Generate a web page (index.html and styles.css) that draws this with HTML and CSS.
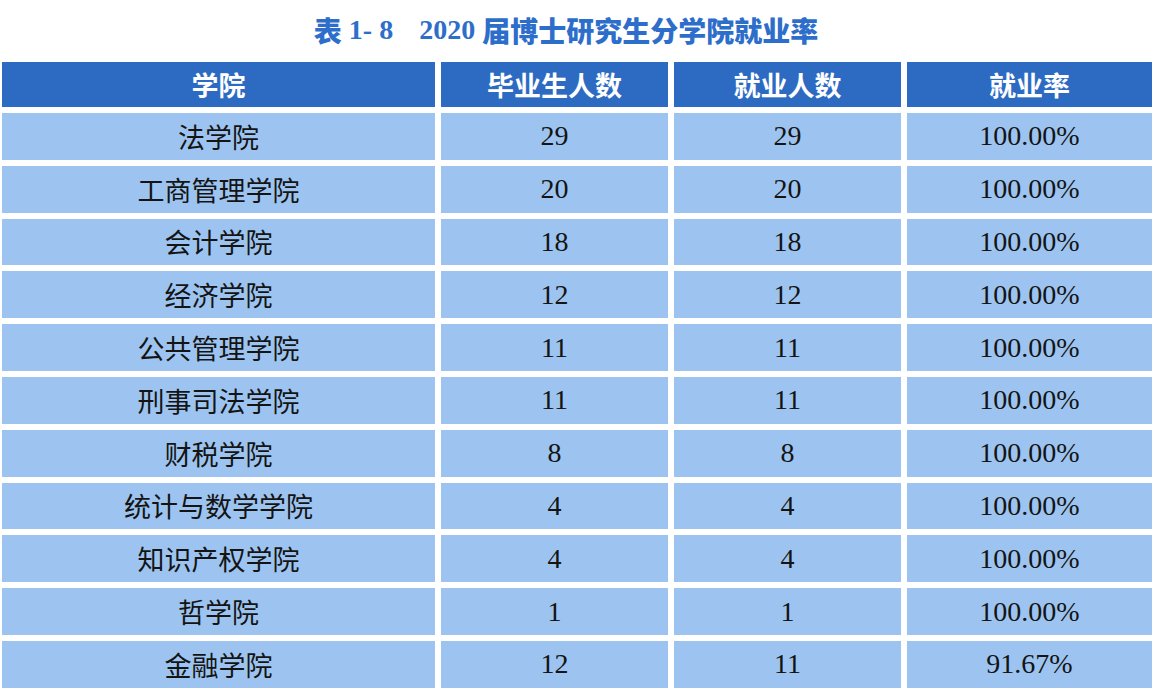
FILE: index.html
```html
<!DOCTYPE html>
<html lang="zh-CN">
<head>
<meta charset="utf-8">
<title>2020届博士研究生分学院就业率</title>
<link rel="stylesheet" href="styles.css">
</head>
<body>
<div class="page">
  <h1 class="title"><span class="cjk">表</span><span class="num"> 1- 8</span><span class="sp"></span><span class="num">2020 </span><span class="cjk">届博士研究生分学院就业率</span></h1>
  <div class="table">
    <div class="cell head">学院</div><div class="cell head">毕业生人数</div><div class="cell head">就业人数</div><div class="cell head">就业率</div>
    <div class="cell">法学院</div><div class="cell n">29</div><div class="cell n">29</div><div class="cell n">100.00%</div>
    <div class="cell">工商管理学院</div><div class="cell n">20</div><div class="cell n">20</div><div class="cell n">100.00%</div>
    <div class="cell">会计学院</div><div class="cell n">18</div><div class="cell n">18</div><div class="cell n">100.00%</div>
    <div class="cell">经济学院</div><div class="cell n">12</div><div class="cell n">12</div><div class="cell n">100.00%</div>
    <div class="cell">公共管理学院</div><div class="cell n">11</div><div class="cell n">11</div><div class="cell n">100.00%</div>
    <div class="cell">刑事司法学院</div><div class="cell n">11</div><div class="cell n">11</div><div class="cell n">100.00%</div>
    <div class="cell">财税学院</div><div class="cell n">8</div><div class="cell n">8</div><div class="cell n">100.00%</div>
    <div class="cell">统计与数学学院</div><div class="cell n">4</div><div class="cell n">4</div><div class="cell n">100.00%</div>
    <div class="cell">知识产权学院</div><div class="cell n">4</div><div class="cell n">4</div><div class="cell n">100.00%</div>
    <div class="cell">哲学院</div><div class="cell n">1</div><div class="cell n">1</div><div class="cell n">100.00%</div>
    <div class="cell">金融学院</div><div class="cell n">12</div><div class="cell n">11</div><div class="cell n">91.67%</div>
  </div>
</div>
</body>
</html>
```

FILE: styles.css
```css
html, body {
  margin: 0;
  padding: 0;
  background: #ffffff;
}
.page {
  width: 1154px;
  height: 690px;
  overflow: hidden;
}
.title {
  margin: 0;
  height: 62px;
  display: flex;
  align-items: center;
  justify-content: center;
  padding-right: 22px;
  padding-bottom: 2px;
  box-sizing: border-box;
  color: #2e6ecb;
  font-size: 28px;
  font-weight: bold;
  line-height: 1;
}
.title .cjk {
  font-family: "Noto Sans CJK SC", sans-serif;
  font-weight: 900;
}
.title .num {
  font-family: "Liberation Serif", serif;
  white-space: pre;
}
.title .sp {
  display: inline-block;
  width: 26px;
}
.table {
  margin-left: 2px;
  display: grid;
  grid-template-columns: 433px 227px 227px 245px;
  grid-template-rows: 45px;
  grid-auto-rows: 46.8px;
  column-gap: 6px;
  row-gap: 6px;
}
.cell {
  background: #9dc4f0;
  color: #141414;
  display: flex;
  align-items: center;
  justify-content: center;
  font-family: "Noto Sans CJK SC", sans-serif;
  font-size: 27px;
  box-sizing: border-box;
}
.cell.n {
  font-family: "Liberation Serif", serif;
  font-size: 28px;
}
.cell.head {
  background: #2d6bc3;
  color: #ffffff;
  font-weight: bold;
  font-size: 27px;
}
```
